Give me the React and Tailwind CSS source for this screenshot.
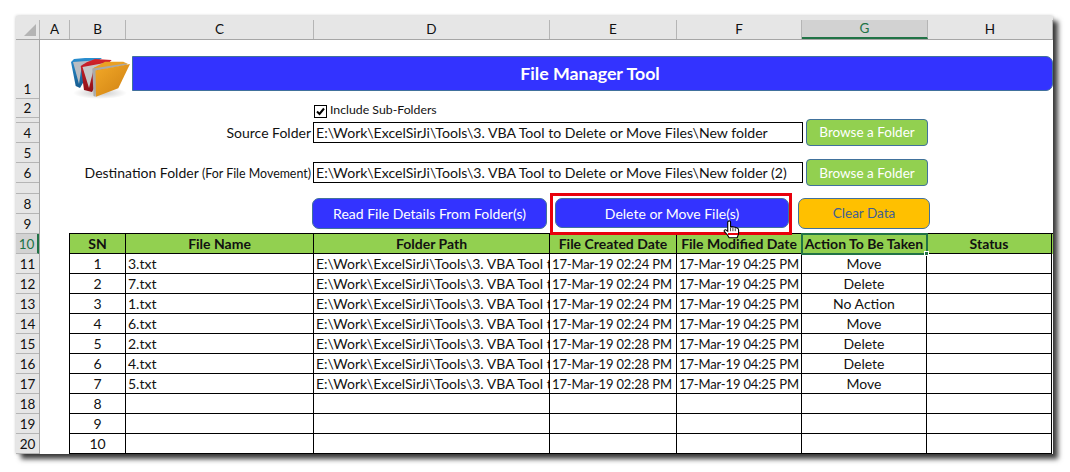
const cols = [
  ["A", "w-[30px]"],
  ["B", "w-[56px]"],
  ["C", "w-[188px]"],
  ["D", "w-[236px]"],
  ["E", "w-[127px]"],
  ["F", "w-[125px]"],
  ["G", "w-[126px]"],
  ["H", "w-[125px]"],
];
const rowHeads = [
  ["1", "h-[59px]"], ["2", "h-[19px]"], ["", "h-[5px]"], ["4", "h-[20px]"], ["5", "h-[20px]"],
  ["6", "h-[20px]"], ["", "h-[11px]"], ["8", "h-[20px]"], ["9", "h-[20px]"], ["10", "h-[20px]"],
  ["11", "h-[20px]"], ["12", "h-[20px]"], ["13", "h-[20px]"], ["14", "h-[20px]"], ["15", "h-[20px]"],
  ["16", "h-[20px]"], ["17", "h-[20px]"], ["18", "h-[20px]"], ["19", "h-[20px]"], ["20", "h-[20px]"],
  ["", "h-[20px]"],
];
const P = "E:\\Work\\ExcelSirJi\\Tools\\3. VBA Tool to Delete or Move Files\\New folder";
const rows = [
  [1, "3.txt", "17-Mar-19 02:24 PM", "Move"],
  [2, "7.txt", "17-Mar-19 02:24 PM", "Delete"],
  [3, "1.txt", "17-Mar-19 02:24 PM", "No Action"],
  [4, "6.txt", "17-Mar-19 02:24 PM", "Move"],
  [5, "2.txt", "17-Mar-19 02:28 PM", "Delete"],
  [6, "4.txt", "17-Mar-19 02:28 PM", "Delete"],
  [7, "5.txt", "17-Mar-19 02:28 PM", "Move"],
  [8, "", "", ""], [9, "", "", ""], [10, "", "", ""], ["", "", "", ""],
];
const grid = "grid grid-cols-[56px_188px_236px_127px_125px_125px_125px]";
const cell = "h-[20px] border-r border-b border-black overflow-hidden whitespace-nowrap leading-[19px]";
const dateCell = "pl-[2px] text-[13px] tracking-[-0.15px] leading-[21px]";

function FolderIcon() {
  return (
    <svg width="62" height="44" viewBox="0 0 62 44" className="block">
      <defs>
        <linearGradient id="o" x1="0" y1="0" x2="1" y2="1">
          <stop offset="0" stopColor="#f2a928" />
          <stop offset="1" stopColor="#cf8012" />
        </linearGradient>
        <linearGradient id="b" x1="0" y1="0" x2="0" y2="1">
          <stop offset="0" stopColor="#2a8fd0" />
          <stop offset="1" stopColor="#155b8f" />
        </linearGradient>
        <linearGradient id="r" x1="0" y1="0" x2="0" y2="1">
          <stop offset="0" stopColor="#d4232c" />
          <stop offset="1" stopColor="#8d0f16" />
        </linearGradient>
        <radialGradient id="sh">
          <stop offset="0" stopColor="#000" stopOpacity="0.22" />
          <stop offset="1" stopColor="#000" stopOpacity="0" />
        </radialGradient>
      </defs>
      <ellipse cx="30" cy="37" rx="27" ry="6" fill="url(#sh)" />
      <path d="M1 6 L4 3 L15 2 L32 2 L24 8 L10 32 L5.7 30 Z" fill="url(#b)" />
      <path d="M3 6 L30 4 L12 9 L9 28 Z" fill="#b9bdc2" />
      <path d="M10.7 10 L16.7 6.3 L25 3 L41.7 4 L36 10 L22 36 L14 34 Z" fill="url(#r)" />
      <path d="M12.5 11 L40 6 L24 12 L19 32 Z" fill="#c8c8c8" />
      <path d="M23 13 L25 11.3 L35 5.7 L53.3 5.7 L58 8 L30 14 Z" fill="#eaa023" />
      <path d="M22.3 12.5 L56 7.5 L57 9 L27 14.5 L25.7 40.7 L23.5 40 Z" fill="#a9a9a9" />
      <path d="M25.5 14.5 L60 8 L48.3 32.3 L26 40.7 Z" fill="url(#o)" />
    </svg>
  );
}

function Hand() {
  return (
    <svg width="17" height="19" viewBox="0 0 18 22" preserveAspectRatio="none" className="block">
      <path
        d="M5.5 1.5 C6.5 .7 8 .9 8 2.5 L8 8 L9.5 7.7 L11.2 8 L13 8.5 L15 9.3 C16 9.8 16.5 10.5 16.5 11.5 L16.5 16 L15 20.5 L6.5 20.5 L4.5 17 L1.5 13.5 C.8 12.5 1.6 11 3 11.4 L5 13 L5 2.5 Z"
        fill="#fff"
        stroke="#000"
        strokeWidth="1.2"
      />
      <path d="M8 9 V13 M10.5 9 V13 M13 9.5 V13" stroke="#000" strokeWidth="0.8" />
    </svg>
  );
}

function Browse() {
  return (
    <div className="w-[122px] h-[27px] shrink-0 flex items-center justify-center pt-[1px] rounded-[4px] bg-[#92d050] border border-[#41719c] text-white text-[13.5px]">
      Browse a Folder
    </div>
  );
}

function PathRow({ label, note, value, rowClass }) {
  return (
    <div className={`flex items-center ${rowClass}`}>
      <div className="w-[273px] shrink-0 text-right pr-[2px] whitespace-nowrap text-[14px] pt-[1px]">
        {label}
        {note && <span className="text-[12.4px]"> {note}</span>}
      </div>
      <div className="w-[490px] h-[21px] shrink-0 border border-black pl-[2px] leading-[20px] text-[14.1px] whitespace-nowrap overflow-hidden">
        {value}
      </div>
      <div className="w-[3px] shrink-0" />
      <Browse />
    </div>
  );
}

export default function App() {
  return (
    <div className="w-[1070px] h-[472px] bg-white pl-[16px] pt-[16px] text-[14px] text-[#111] [font-family:Lato,'Open_Sans',sans-serif] overflow-hidden">
      <div className="w-[1037px] h-[438px] bg-white overflow-hidden flex flex-col shadow-[0_0_3px_rgba(0,0,0,0.25),5px_5px_5px_rgba(0,0,0,0.75)]">
        {/* column header */}
        <div className="flex h-[24px] shrink-0 bg-[#e6e6e6] pt-[4px] border-b border-[#a6a6a6] text-[13.5px]">
          <div className="w-[24px] shrink-0 flex items-end justify-end pr-[3px] pb-[3px] border-r border-[#b5b5b5]">
            <div className="w-[12px] h-[12px] bg-[#b4b4b4] [clip-path:polygon(100%_0,100%_100%,0_100%)]" />
          </div>
          {cols.map(([n, w]) => (
            <div
              key={n}
              className={`${w} shrink-0 flex items-center justify-center border-r border-[#b5b5b5] ${
                n === "G" ? "bg-[#d2d2d2] text-[#217346] border-b-2 border-b-[#217346]" : ""
              }`}
            >
              {n}
            </div>
          ))}
        </div>
        <div className="flex flex-1 min-h-0">
          {/* row header */}
          <div className="w-[24px] shrink-0 bg-[#e6e6e6] border-r border-[#a6a6a6] flex flex-col text-[13.5px]">
            {rowHeads.map(([n, h], i) => (
              <div
                key={i}
                className={`${h} shrink-0 flex items-end justify-center leading-[18px] border-b border-[#b5b5b5] overflow-hidden ${
                  n === "10" ? "bg-[#d2d2d2] text-[#217346] border-r-2 border-r-[#217346]" : ""
                }`}
              >
                {n}
              </div>
            ))}
          </div>
          {/* sheet */}
          <div className="flex-1 min-w-0 flex flex-col relative">
            <div className="h-[59px] shrink-0 flex items-start pl-[30px] pt-[16px]">
              <div className="w-[62px] h-[44px] shrink-0">
                <FolderIcon />
              </div>
              <div className="w-[921px] h-[35px] shrink-0 flex items-center justify-center pr-[5px] bg-[#3333ff] border border-[#41719c] rounded-r-[7px] text-white font-bold text-[17.8px]">
                File Manager Tool
              </div>
            </div>
            <div className="h-[19px] shrink-0 flex items-center pl-[274px] pt-[5px] gap-[3px] text-[12.3px]">
              <div className="w-[13px] h-[13px] shrink-0 border border-black flex items-center justify-center">
                <svg width="9" height="9" viewBox="0 0 9 9">
                  <path d="M1 4.5 L3.5 7 L8 1.5" fill="none" stroke="#000" strokeWidth="2" />
                </svg>
              </div>
              <span className="-mt-[2px]">Include Sub-Folders</span>
            </div>
            <PathRow label="Source Folder" value={P} rowClass="h-[25px] pt-[3px]" />
            <div className="h-[16px] shrink-0" />
            <PathRow label="Destination Folder" note="(For File Movement)" value={P + " (2)"} rowClass="h-[27px]" />
            <div className="h-[7px] shrink-0" />
            <div className="h-[42px] shrink-0 flex items-start pl-[272px] relative z-10">
              <div className="w-[235px] h-[31px] mt-[5px] shrink-0 flex items-center justify-center rounded-[7px] bg-[#3333ff] border border-[#41719c] text-white">
                Read File Details From Folder(s)
              </div>
              <div className="ml-[3px] w-[242px] h-[42px] shrink-0 border-[3px] border-[#e8000c] pt-[2px] pl-[2px]">
                <div className="w-[234px] h-[30px] flex items-center justify-center rounded-[7px] bg-[#3333ff] border border-[#41719c] text-white">
                  Delete or Move File(s)
                </div>
              </div>
              <div className="ml-[6px] w-[132px] h-[31px] mt-[5px] shrink-0 flex items-center justify-center rounded-[7px] bg-[#ffc000] border border-[#41719c] text-[#3f5f92] text-[13.5px]">
                Clear Data
              </div>
              <div className="absolute left-[683px] top-[27px]">
                <Hand />
              </div>
              <div className="absolute left-[688px] top-[40px] w-[10px] h-[2px] bg-[#e8000c]" />
            </div>
            {/* table */}
            <div className="ml-[29px] border-l border-t border-black w-[984px] -mt-[2px]">
              <div className={`${grid} bg-[#92d050] font-bold text-center`}>
                {["SN", "File Name", "Folder Path", "File Created Date", "File Modified Date", "Action To Be Taken", "Status"].map((h) => (
                  <div key={h} className={cell}>
                    {h}
                  </div>
                ))}
              </div>
              {rows.map((r, i) => (
                <div key={i} className={grid}>
                  <div className={`${cell} text-center`}>{r[0]}</div>
                  <div className={`${cell} pl-[2px]`}>{r[1]}</div>
                  <div className={`${cell} pl-[2px]`}>{r[1] && P}</div>
                  <div className={`${cell} ${dateCell}`}>{r[2]}</div>
                  <div className={`${cell} ${dateCell}`}>{r[1] && "17-Mar-19 04:25 PM"}</div>
                  <div className={`${cell} text-center`}>{r[3]}</div>
                  <div className={cell} />
                </div>
              ))}
            </div>
            {/* active cell outline */}
            <div className="absolute left-[761px] top-[193px] w-[127px] h-[22px] border-2 border-[#217346] pointer-events-none">
              <div className="absolute -right-[3px] -bottom-[3px] w-[5px] h-[5px] bg-[#217346] border border-white" />
            </div>
          </div>
        </div>
      </div>
    </div>
  );
}
